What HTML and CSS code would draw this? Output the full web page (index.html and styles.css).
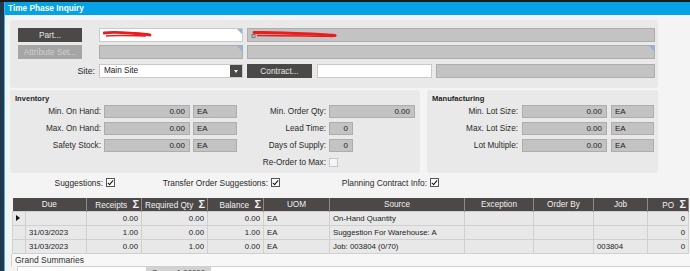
FILE: index.html
```html
<!DOCTYPE html>
<html>
<head>
  <link rel="stylesheet" href="styles.css">
</head>
<body>
  <div class="screen">
    <div class="rail"></div>
    <div class="window">
      <div class="titlebar">Time Phase Inquiry</div>

      <div class="content">
        <div class="panel head">
          <div class="head-row">
            <button class="btn dark">Part...</button>
            <div class="field white corner">
              <svg class="scribble" width="50" height="10" viewBox="0 0 50 10">
                <path d="M1 3 C12 1.5 24 3 32 3.5 S44 4.5 47 5" stroke="#ee1b1b" stroke-width="2.8" fill="none" stroke-linecap="round"/>
                <path d="M3 6 C14 5 28 5.5 43 6" stroke="#ee1b1b" stroke-width="1.4" fill="none"/>
              </svg>
            </div>
            <div class="field grey">
              <svg class="scribble" width="90" height="10" viewBox="0 0 90 10">
                <rect x="1" y="4.5" width="3" height="3" fill="none" stroke="#666" stroke-width="0.8"/>
                <path d="M3 2.5 C20 2 40 3 60 4 S80 5 84 5.5" stroke="#ee1b1b" stroke-width="3" fill="none" stroke-linecap="round"/>
                <path d="M6 5.5 C30 5.5 55 6 82 6.5" stroke="#ee1b1b" stroke-width="1.4" fill="none"/>
              </svg>
            </div>
          </div>
          <div class="head-row">
            <button class="btn light" disabled>Attribute Set...</button>
            <div class="field grey corner"></div>
            <div class="field grey corner"></div>
          </div>
          <div class="head-row site-row">
            <span class="label">Site:</span>
            <div class="field white combo">
              <span class="combo-text">Main Site</span>
              <span class="combo-btn"><span class="arrow"></span></span>
            </div>
            <div class="contract">
              <button class="btn dark contract-btn">Contract...</button>
              <div class="field white contract-input"></div>
              <div class="field grey fill"></div>
            </div>
          </div>
        </div>

        <div class="groups">
          <div class="panel inventory">
            <div class="group-title">Inventory</div>
            <div class="inv-grid">
              <span class="label">Min. On Hand:</span>
              <div class="field grey num">0.00</div>
              <div class="field grey uom">EA</div>
              <span class="label">Min. Order Qty:</span>
              <div class="field grey num">0.00</div>

              <span class="label">Max. On Hand:</span>
              <div class="field grey num">0.00</div>
              <div class="field grey uom">EA</div>
              <span class="label">Lead Time:</span>
              <div class="field grey num short">0</div>

              <span class="label">Safety Stock:</span>
              <div class="field grey num">0.00</div>
              <div class="field grey uom">EA</div>
              <span class="label">Days of Supply:</span>
              <div class="field grey num short">0</div>

              <span></span>
              <span></span>
              <span></span>
              <span class="label">Re-Order to Max:</span>
              <span class="check empty"></span>
            </div>
          </div>

          <div class="panel manufacturing">
            <div class="group-title">Manufacturing</div>
            <div class="mfg-grid">
              <span class="label">Min. Lot Size:</span>
              <div class="field grey num">0.00</div>
              <div class="field grey uom">EA</div>

              <span class="label">Max. Lot Size:</span>
              <div class="field grey num">0.00</div>
              <div class="field grey uom">EA</div>

              <span class="label">Lot Multiple:</span>
              <div class="field grey num">0.00</div>
              <div class="field grey uom">EA</div>
            </div>
          </div>
        </div>

        <div class="options">
          <div class="option opt-1">
            <span class="label">Suggestions:</span>
            <span class="check on"></span>
          </div>
          <div class="option opt-2">
            <span class="label">Transfer Order Suggestions:</span>
            <span class="check on"></span>
          </div>
          <div class="option opt-3">
            <span class="label">Planning Contract Info:</span>
            <span class="check on"></span>
          </div>
        </div>

        <table class="grid">
          <colgroup>
            <col class="c-sel">
            <col class="c-due">
            <col class="c-rec">
            <col class="c-req">
            <col class="c-bal">
            <col class="c-uom">
            <col class="c-src">
            <col class="c-exc">
            <col class="c-ord">
            <col class="c-job">
            <col class="c-po">
          </colgroup>
          <thead>
            <tr>
              <th colspan="2">Due</th>
              <th class="sum">Receipts <span class="sigma">Σ</span></th>
              <th class="sum">Required Qty <span class="sigma">Σ</span></th>
              <th class="sum">Balance <span class="sigma">Σ</span></th>
              <th>UOM</th>
              <th>Source</th>
              <th>Exception</th>
              <th>Order By</th>
              <th>Job</th>
              <th class="sum">PO <span class="sigma">Σ</span></th>
            </tr>
          </thead>
          <tbody>
            <tr>
              <td class="sel"><span class="pointer"></span></td>
              <td></td>
              <td class="n">0.00</td>
              <td class="n">0.00</td>
              <td class="n">0.00</td>
              <td>EA</td>
              <td>On-Hand Quantity</td>
              <td></td>
              <td></td>
              <td></td>
              <td class="n">0</td>
            </tr>
            <tr>
              <td class="sel"></td>
              <td>31/03/2023</td>
              <td class="n">1.00</td>
              <td class="n">0.00</td>
              <td class="n">1.00</td>
              <td>EA</td>
              <td>Suggestion For Warehouse: A</td>
              <td></td>
              <td></td>
              <td></td>
              <td class="n">0</td>
            </tr>
            <tr>
              <td class="sel"></td>
              <td>31/03/2023</td>
              <td class="n">0.00</td>
              <td class="n">1.00</td>
              <td class="n">0.00</td>
              <td>EA</td>
              <td>Job: 003804 (0/70)</td>
              <td></td>
              <td></td>
              <td>003804</td>
              <td class="n">0</td>
            </tr>
          </tbody>
        </table>

        <div class="summaries">Grand Summaries</div>
        <div class="sum-row">
          <span class="sum-box">Sum = 1.00000</span>
        </div>
      </div>
    </div>
  </div>
</body>
</html>
```

FILE: styles.css
```css
* {
  box-sizing: border-box;
}

body {
  margin: 0;
  padding: 0;
  width: 690px;
  height: 271px;
  overflow: hidden;
  background: #f3f3f3;
  font-family: "Liberation Sans", Arial, sans-serif;
  font-size: 8px;
  color: #222;
}

.screen {
  display: flex;
  height: 271px;
  border-top: 2px solid #1b1b1b;
}

.rail {
  width: 4px;
  background: #22384d;
}

.window {
  flex: 1;
  border-left: 1px solid #3fb4e8;
  background: #f4f4f4;
  overflow: hidden;
}

.titlebar {
  height: 13px;
  line-height: 13px;
  padding-left: 3px;
  background: #06a2e6;
  color: #fff;
  font-weight: bold;
  font-size: 8.3px;
}

.content {
  padding-left: 5px;
}

.panel {
  background: #e9e9e9;
  border-radius: 3px;
}

/* header block: part / attribute set / site */
.head {
  margin-top: 5px;
  width: 648px;
  padding: 8px 3px 10px 8px;
  display: flex;
  flex-direction: column;
  gap: 3px;
}

.head-row {
  display: grid;
  grid-template-columns: 77px 144px 1fr;
  column-gap: 4px;
  height: 14px;
}

.site-row {
  margin-top: 2px;
}

.btn {
  width: 64px;
  height: 14px;
  padding: 0;
  border: none;
  font-family: inherit;
  font-size: 8.3px;
}

.btn.dark {
  background: #4b4948;
  color: #e4e4e4;
}

.btn.light {
  background: #a5a5a5;
  color: #cfcfcf;
}

.field {
  position: relative;
  height: 100%;
  line-height: 11px;
  border: 1px solid #b3b3b3;
  white-space: nowrap;
  overflow: hidden;
}

.field.white {
  background: #fff;
  border-color: #c9c9c9;
}

.field.grey {
  background: #c3c3c3;
  border-color: #adadad;
}

.field.corner::after {
  content: "";
  position: absolute;
  top: 0;
  right: 0;
  border-top: 5px solid #8fb4e0;
  border-left: 5px solid transparent;
}

.scribble {
  position: absolute;
  left: 3px;
  top: 1px;
}

.label {
  text-align: right;
  line-height: 13px;
  white-space: nowrap;
  color: #2a2a2a;
  font-size: 8.2px;
}

.site-row .label {
  line-height: 14px;
  font-size: 8.8px;
}

.combo {
  display: flex;
}

.combo-text {
  flex: 1;
  padding-left: 4px;
  line-height: 12px;
  font-size: 8.2px;
}

.combo-btn {
  width: 12px;
  background: #4b4948;
  display: flex;
  align-items: center;
  justify-content: center;
}

.arrow {
  border-top: 3px solid #eee;
  border-left: 2px solid transparent;
  border-right: 2px solid transparent;
}

.contract {
  display: flex;
  gap: 4px;
}

.contract-btn {
  width: 65px;
}

.contract-input {
  width: 115px;
  margin-left: 1px;
}

.fill {
  flex: 1;
}

/* inventory / manufacturing */
.groups {
  display: flex;
  gap: 7px;
  margin-top: 2px;
  height: 83px;
}

.inventory {
  width: 410px;
  padding: 3px 0 0 3px;
}

.manufacturing {
  width: 231px;
  padding: 3px 0 0 3px;
}

.group-title {
  font-weight: bold;
  font-size: 7.6px;
  height: 11px;
  line-height: 11px;
  margin: 0 0 1px 2px;
  color: #1e1e1e;
}

.inv-grid {
  display: grid;
  grid-template-columns: 88px 86px 44px 86px 86px;
  grid-auto-rows: 13px;
  column-gap: 3px;
  row-gap: 4px;
}

.mfg-grid {
  display: grid;
  grid-template-columns: 88px 85px 43px;
  grid-auto-rows: 13px;
  column-gap: 4px;
  row-gap: 4px;
}

.num {
  text-align: right;
  padding-right: 4px;
}

.num.short {
  width: 24px;
}

.uom {
  padding-left: 3px;
}

.check {
  display: inline-block;
  width: 9px;
  height: 9px;
  margin-top: 2px;
  border: 1px solid #c8c8c8;
  background: #f4f4f4;
}

.check.on {
  position: relative;
  border-color: #555;
  background: #fff;
}

.check.on::after {
  content: "";
  position: absolute;
  left: 2px;
  top: 0;
  width: 2px;
  height: 5px;
  border-right: 1.5px solid #111;
  border-bottom: 1.5px solid #111;
  transform: rotate(40deg);
}

.options {
  display: flex;
  height: 25px;
  padding-top: 4px;
}

.option {
  display: flex;
  gap: 3px;
}

.option .label {
  font-size: 8.4px;
  line-height: 13px;
}

.option .check {
  margin-top: 1px;
}

.opt-1 .label {
  width: 93px;
}

.opt-2 .label {
  width: 153px;
}

.opt-3 .label {
  width: 147px;
}

/* planning grid */
.grid {
  margin-left: 2px;
  width: 676px;
  border-collapse: collapse;
  table-layout: fixed;
}

.c-sel { width: 13px; }
.c-due { width: 61px; }
.c-rec { width: 55px; }
.c-req { width: 66px; }
.c-bal { width: 56px; }
.c-uom { width: 66px; }
.c-src { width: 135px; }
.c-exc { width: 69px; }
.c-ord { width: 60px; }
.c-job { width: 54px; }
.c-po { width: 41px; }

.grid th {
  height: 13px;
  padding: 0 3px;
  background: #4b4847;
  color: #f2f2f2;
  font-weight: normal;
  font-size: 8.2px;
  border-right: 1px solid #8c8988;
  white-space: nowrap;
}

.grid th.sum {
  text-align: right;
  padding-right: 2px;
}

.sigma {
  font-weight: bold;
  font-size: 11px;
  margin-left: 3px;
  line-height: 10px;
}

.grid td {
  height: 14px;
  padding: 0 3px;
  background: #e8e8e8;
  border: 1px solid #d0d0d0;
  font-size: 7.8px;
  white-space: nowrap;
  overflow: hidden;
}

.grid td.n {
  text-align: right;
}

.grid td.sel {
  padding: 0 0 0 3px;
}

.pointer {
  display: inline-block;
  border-left: 4px solid #111;
  border-top: 3px solid transparent;
  border-bottom: 3px solid transparent;
}

.summaries {
  height: 12px;
  line-height: 12px;
  padding-left: 3px;
  margin-left: 1px;
  background: #f7f7f7;
  border-left: 1px solid #cfcfcf;
  color: #333;
  font-size: 8.5px;
}

.sum-row {
  height: 10px;
  margin-left: 7px;
  background: #fff;
  border-top: 1px solid #cfcfcf;
  border-left: 1px solid #cfcfcf;
  padding-left: 128px;
}

.sum-box {
  display: inline-block;
  width: 65px;
  padding-top: 1px;
  background: #d2d2d2;
  text-align: center;
  color: #333;
  font-size: 7.8px;
  line-height: 9px;
}
```
